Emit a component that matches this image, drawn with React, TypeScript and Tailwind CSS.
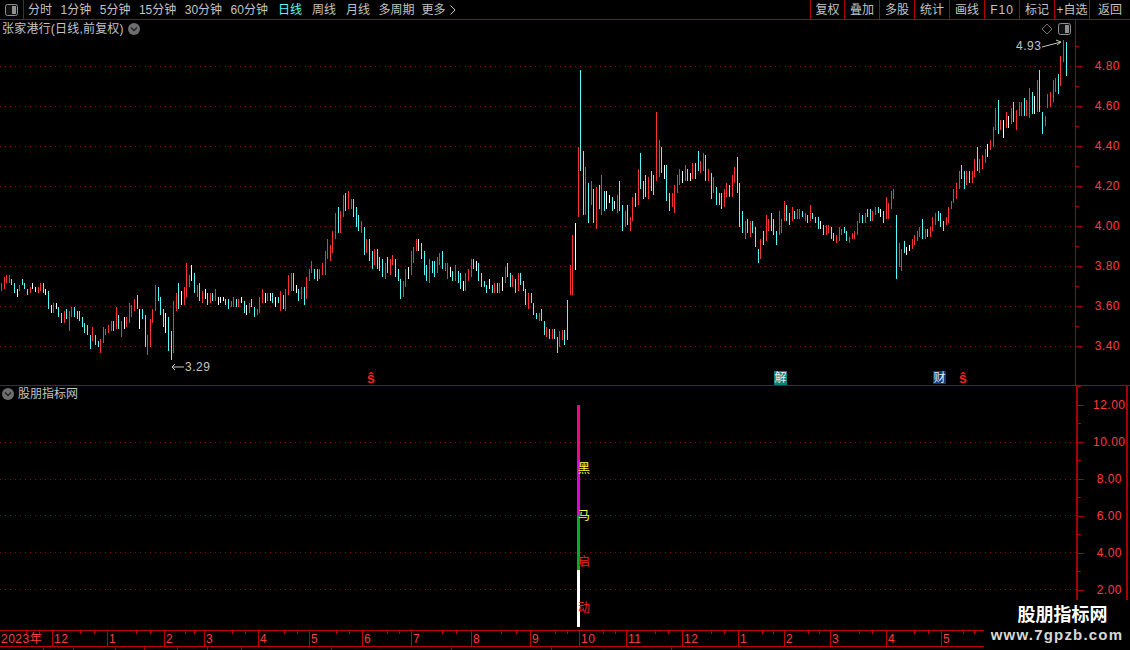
import React from "react";

type G = { ox: number; oy: number; s: string };
const groups: G[] = [
  { ox: 0, oy: 260, s: "4 69 93 r,13 51 87 r,19 45 69 r,28 45 69 r,34 57 75 c,43 69 99 c,52 87 111 w,58 75 93 r,67 57 75 c,73 69 87 c,82 87 105 c,91 81 99 r,97 69 87 w,106 81 96 w,115 81 99 r,121 69 93 r,130 69 99 c,136 87 105 w,145 93 147 c,154 135 159 w,160 129 159 r,169 129 147 w,175 141 171 c,184 159 189 c,193 153 189 r,199 147 177 c,208 153 213 r,214 141 171 r,223 141 171 c,232 153 177 c,238 153 183 c,247 171 201 c,253 189 219 c,262 195 225 c,271 225 267 c,277 201 243 r,286 225 255 c,295 243 261 c,301 237 279 r,310 201 249 r,316 207 225 r,325 195 219 r,334 183 213 r,340 183 213 c,349 141 207 r,355 165 207 c,364 183 231 r,373 171 207 w,379 171 201 r,388 129 189 r,394 135 171 r,403 117 153 r,412 105 147 c,418 147 207 w" },
  { ox: 140, oy: 180, s: "6 387 417 c,15 405 501 c,21 465 525 r,30 417 501 r,36 387 429 r,45 315 393 r,54 321 363 c,60 351 405 c,69 387 441 c,75 399 459 w,84 411 513 c,93 453 540 c,99 363 519 r,108 339 393 r,114 309 387 c,123 333 375 w,132 321 375 r,138 249 351 r,147 285 321 r,153 255 303 w,162 279 339 c,171 315 351 r,177 309 363 c,186 333 369 r,195 327 357 w,201 339 375 c,210 339 369 r,216 339 363 c,225 327 363 r,234 351 375 w,240 351 369 w,249 351 363 w,255 357 375 c,264 357 387 c,273 363 381 r,279 351 381 r,288 357 381 c,294 357 381 r,303 351 369 w,312 363 399 c,318 375 405 w,327 369 399 r,333 357 381 c,342 381 411 c,351 387 405 r,357 351 399 r,366 327 369 r,375 339 369 w,381 339 363 r,390 339 363 w,396 339 369 c,405 351 381 w,414 351 369 c,420 333 393 r,429 345 387 c,435 327 393 r,444 285 345 r,453 279 333 r,459 279 333 c,468 315 339 w,474 327 363 c,483 321 357 r,492 321 375 c,498 291 357 r,507 267 303 r,513 243 279 r,522 267 297 c,531 267 303 c,537 267 297 r,546 249 285 r,555 213 285 r,561 177 237 r,570 195 243 r,576 153 219 r,585 99 177 r,594 81 159 c,600 93 159 r,609 45 111 r,615 39 93 c,624 33 87 r,633 57 87 r,639 57 111 c,648 81 141 c,654 105 153 c,663 123 159 r,672 141 225 c,678 177 219 r,687 177 243 c,696 213 267 c,702 207 255 r,711 207 267 c,717 231 273 c,726 237 291 c,735 249 297 r,741 231 279 c,750 237 285 r,756 225 255 r,765 237 291 c,774 267 303 c,780 297 357 c,789 303 351 r,795 267 321 r,804 261 297 w,813 213 285 r,819 201 249 r,828 177 213 r,834 177 213 w,843 189 237 c,852 213 285 c,858 255 303 c,867 237 309 r,876 243 279 c,882 243 291 c,891 231 279 r,897 219 255 r,906 213 267 c,915 249 273 r,921 249 297 r,930 261 291 w,936 273 303 c,945 255 303 r,954 273 309 c,960 279 327 c,969 303 333 w,975 279 333 r,984 267 303 r,993 237 291 r,999 237 267 c,1008 243 273 w,1014 249 303 c,1023 279 321 c,1032 303 321 c,1038 315 339 c,1047 297 327 w,1056 315 339 c,1062 309 339 r,1071 309 339 c,1077 309 339 r,1086 291 333 w,1095 261 309 r,1101 249 291 c,1110 279 321 c,1116 285 321 r,1125 297 339 c,1134 279 333 r,1140 279 315 c,1149 303 333 c,1155 327 375 c,1164 339 387 r,1173 339 369 c,1179 369 405 c,1188 399 417 c,1197 399 423 r,1203 387 423 c,1212 423 465 c,1218 441 471 r,1227 447 477 c,1236 447 477 r,1242 447 477 c,1251 471 519 c,1257 453 501 r" },
  { ox: 560, oy: 0, s: "6 990 1020 r,12 990 1035 c,21 900 1020 c,30 795 885 r,36 705 885 r,45 669 810 w" },
  { ox: 500, oy: 60, s: "235 261 471 r,241 30 333 c,250 273 465 c,256 321 465 r,265 369 489 c,274 363 435 r,280 387 489 c,289 381 507 r,298 375 447 c,304 345 465 r,313 393 453 c,319 393 447 w,328 405 429 w,337 411 453 c,343 423 447 w,352 405 459 r,358 363 453 c,367 435 513 c,376 453 501 r,382 435 495 c,391 471 513 r,397 411 483 r,406 399 441 c,415 327 435 r,421 279 387 c,430 363 417 c,436 345 411 c,445 351 417 r,454 333 393 c,460 345 405 c,469 155 363 r,478 240 351 r,484 261 339 c,493 315 357 w,499 315 423 c,508 399 453 c,517 399 441 r,523 375 459 r,532 345 399 r,538 327 375 r,547 333 369 w,556 315 363 r,562 327 363 c,571 339 363 w,577 309 357 r,586 309 357 c,595 273 333 c,601 303 339 r,610 279 333 r,616 285 363 c,625 327 363 r,634 339 417 c,640 351 399 r,649 381 435 c,658 399 435 c,664 399 447 c,673 387 441 r,679 369 411 r,688 375 411 c,697 345 411 r,703 321 369 r,712 291 399 c,718 369 501 c,727 453 519 c,736 483 537 r,742 477 519 c,751 483 531 r,757 483 519 c" },
  { ox: 730, oy: 150, s: "76 231 291 c,85 297 339 c,91 267 327 r,100 243 285 c,109 195 273 r,115 207 243 r,124 189 243 c,130 207 255 c,139 243 285 c,148 183 255 r,154 207 249 r,163 153 213 r,169 165 213 c,178 189 225 c,187 171 213 r,193 183 207 c,202 177 207 r,208 177 207 r,217 183 201 c,226 189 213 r,232 195 219 c,241 165 213 r,247 189 207 c,256 201 219 c,265 201 237 c,271 213 237 w,280 225 255 c,289 225 255 r,295 225 249 r,304 231 267 c,310 249 273 c,319 255 279 r,328 231 273 r,334 237 255 r,343 231 249 c,349 243 273 c,358 261 279 r,367 249 267 r,373 243 267 r,382 213 255 r,388 189 219 r,397 195 219 c,406 189 219 r,412 177 201 c,421 177 213 c,427 183 213 r,436 171 195 r,445 171 189 c,451 177 201 w,460 183 219 c,469 141 207 r,475 159 207 r,484 123 177 r,490 117 147 r,499 195 387 c,508 279 351 r,514 297 363 r,523 273 309 c,529 291 315 w,538 285 303 w,547 267 297 r,553 255 285 r,562 243 273 r,568 231 261 r,577 207 267 c,586 237 267 r,592 237 261 c" },
  { ox: 880, oy: 30, s: "151 591 621 r,157 561 603 r,166 549 585 r,175 543 573 c,181 549 591 c,190 573 603 c,199 561 585 r,205 531 579 r,214 513 537 r,220 477 519 r,229 459 507 r,238 423 477 r,244 405 447 c,253 423 477 c,259 423 465 r,268 423 459 c,277 423 459 r,283 387 441 r,292 351 423 c,298 387 429 r,307 375 417 r,316 357 399 r,322 342 381 w,331 330 360 r,340 291 351 r,346 234 300 r,355 210 312 c,361 270 300 r,370 270 324 w,379 246 294 r,385 258 294 w,394 234 282 r,400 216 276 c,409 240 300 r,418 216 258 r,424 216 258 r,433 204 258 c,439 210 258 r,448 174 264 r,457 186 252 c,463 198 252 w,472 150 246 r,478 120 246 c,487 246 312 c,496 258 288 r,502 192 234 r,511 186 231 r,520 150 216 r,526 144 186 r,535 132 192 c,541 78 168 r,550 30 96 r,559 36 138 c" },
];
const colors: Record<string, string> = { r: "#ff3232", c: "#54fcfc", w: "#ffffff" };
const bars = groups.flatMap((g) =>
  g.s.split(",").map((t) => {
    const [x, a, b, c] = t.split(" ");
    const y0 = g.oy + Math.round(+a / 3);
    const y1 = g.oy + Math.round(+b / 3);
    return { x: g.ox + Math.floor(+x / 3), y: y0, h: y1 - y0, c: colors[c] };
  })
);

const periods: [string, string][] = [
  ["分时", ""], ["1分钟", ""], ["5分钟", ""], ["15分钟", ""], ["30分钟", ""], ["60分钟", ""],
  ["日线", "ml-[1.5px] text-[#54fcfc]"], ["周线", "ml-[1.5px]"], ["月线", "ml-[1.5px]"], ["多周期", ""],
];
const tools = [
  ["复权", "w-[34px]"], ["叠加", "w-[35px]"], ["多股", "w-[35px]"], ["统计", "w-[35px]"], ["画线", "w-[35px]"],
  ["F10", "w-[35px]"], ["标记", "w-[35px]"], ["+自选", "w-[35px]"], ["返回", "w-[41px]"],
];
const months: [string, number][] = [
  ["2023年", 52], ["12", 55], ["1", 57], ["2", 40], ["3", 54], ["4", 51], ["5", 53], ["6", 49], ["7", 60],
  ["8", 59], ["9", 49], ["10", 47], ["11", 56], ["12", 56], ["1", 46], ["2", 46], ["3", 56], ["4", 55], ["5", 43],
];
const bottomCells = [44, 30, 42, 29, 33, 30, 34, 90, 120, 100, 120, 313];

function PanelIcon() {
  return (
    <svg width="13" height="12" viewBox="0 0 13 12">
      <rect x="0.5" y="0.5" width="12" height="11" rx="2" fill="#111" stroke="#909090" />
      <rect x="7" y="2" width="4" height="8" fill="#909090" />
    </svg>
  );
}
function Chevron() {
  return (
    <svg width="12" height="12" viewBox="0 0 12 12">
      <circle cx="6" cy="6" r="6" fill="#6e6e6e" />
      <path d="M3 4.5 L6 7.5 L9 4.5" fill="none" stroke="#222" strokeWidth="1.4" />
    </svg>
  );
}
function GridH({ ys, x2 }: { ys: number[]; x2: number }) {
  return (
    <>
      {ys.map((y) => (
        <line key={y} x1="0" x2={x2} y1={y + 0.5} y2={y + 0.5} stroke="#861010" strokeDasharray="1 4" />
      ))}
    </>
  );
}
function Axis({ labels, step, pad }: { labels: string[]; step: string; pad: string }) {
  return (
    <div className={`flex flex-col ${pad}`}>
      {labels.map((l) => (
        <div key={l} className={`relative flex items-center ${step} pl-[15px] justify-start`}>
          <div className="absolute left-0 top-0 h-px w-[3px] bg-[#a80000]" />
          <div className="absolute left-0 top-1/2 h-px w-[6px] bg-[#a80000]" />
          <span className="w-[29px] text-right text-[12px] tracking-[0.5px] text-[#ff3c3c]">{l}</span>
        </div>
      ))}
    </div>
  );
}

export default function App() {
  return (
    <div className="relative h-[650px] w-[1130px] overflow-hidden bg-black text-[12px] leading-none text-[#c4c4c4] font-['Liberation_Sans','Noto_Sans_CJK_SC',sans-serif]">
      {/* toolbar */}
      <div className="flex h-[20px] items-stretch border-b border-[#b00000]">
        <div className="flex w-[24px] items-center justify-center border-r border-[#b00000]">
          <PanelIcon />
        </div>
        <div className="flex items-center gap-[8.5px] pl-[4px]">
          {periods.map(([p, c]) => (
            <span key={p} className={c}>{p}</span>
          ))}
          <span className="flex items-center gap-[4px] -ml-[1.5px]">
            更多
            <svg width="6" height="10" viewBox="0 0 6 10"><path d="M0.5 0.5 L5 5 L0.5 9.5" fill="none" stroke="#c4c4c4" /></svg>
          </span>
        </div>
        <div className="ml-auto flex">
          {tools.map(([t, w]) => (
            <div key={t} className={`flex items-center justify-center whitespace-nowrap border-l border-[#b00000] ${w} ${t === "F10" ? "tracking-[1px]" : ""}`}>{t}</div>
          ))}
        </div>
      </div>

      {/* main panel */}
      <div className="flex h-[366px] border-b border-[#a80000]">
        <div className="relative w-[1075px]">
          <svg className="absolute inset-0" width="1075" height="365" viewBox="0 20 1075 365" shapeRendering="crispEdges">
            <GridH ys={[66, 106, 146, 186, 226, 266, 306, 346]} x2={1075} />
            {bars.map((b, i) => (
              <rect key={i} x={b.x} y={b.y} width="1" height={b.h} fill={b.c} />
            ))}
          </svg>
          <div className="absolute left-[2px] top-[3px] flex items-center gap-[4px]">
            <span className="tracking-[0.2px]">张家港行(日线,前复权)</span>
            <Chevron />
          </div>
          <div className="absolute left-[1041px] top-[3px] flex items-center gap-[5px]">
            <svg width="12" height="12" viewBox="0 0 12 12"><path d="M6 1 L11 6 L6 11 L1 6 Z" fill="none" stroke="#707070" /></svg>
            <PanelIcon />
          </div>
          <div className="absolute left-[1016px] top-[20px] flex items-center tracking-[0.5px]">
            <span>4.93</span>
            <svg width="22" height="10" viewBox="0 0 22 10" className="-mt-[4px]">
              <path d="M1 8 L20 3 M15 1 L20 3 L16 6" fill="none" stroke="#c4c4c4" />
            </svg>
          </div>
          <div className="absolute left-[171px] top-[341px] flex items-center tracking-[0.5px]">
            <svg width="13" height="8" viewBox="0 0 13 8">
              <path d="M1 4 L13 4 M4 1 L1 4 L4 7" fill="none" stroke="#c4c4c4" />
            </svg>
            <span className="ml-[1px]">3.29</span>
          </div>
          <span className="absolute left-[367px] top-[351px] font-bold text-[14px] text-[#ff2020]">ŝ</span>
          <span className="absolute left-[774px] top-[351px] flex h-[14px] w-[13px] items-center justify-center bg-[#0a8080] text-[#e8e8e8]">解</span>
          <span className="absolute left-[933px] top-[351px] flex h-[13px] w-[13px] items-center justify-center bg-[#103c70] text-[#e8e8e8]">财</span>
          <span className="absolute left-[959px] top-[351px] font-bold text-[14px] text-[#ff2020]">ŝ</span>
        </div>
        <div className="flex-1 border-l border-[#a80000]">
          <Axis labels={["4.80", "4.60", "4.40", "4.20", "4.00", "3.80", "3.60", "3.40"]} step="h-[40px]" pad="pt-[26px]" />
        </div>
      </div>

      {/* indicator panel */}
      <div className="flex h-[244px]">
        <div className="relative w-[1076px]">
          <svg className="absolute inset-0" width="1076" height="244" viewBox="0 386 1076 244" shapeRendering="crispEdges">
            <GridH ys={[442, 479, 515, 552, 589]} x2={1076} />
          </svg>
          <div className="absolute left-[2px] top-[2px] flex items-center gap-[4px]">
            <Chevron />
            <span>股朋指标网</span>
          </div>
          <div className="absolute left-[577px] top-[19px] flex w-[3px] flex-col">
            <div className="h-[55px] bg-[#ff0080]" />
            <div className="h-[56px] bg-[#e000e0]" />
            <div className="h-[54px] bg-[#00b020]" />
            <div className="h-[57px] bg-white" />
          </div>
          <span className="absolute left-[578px] top-[77px] text-[#ffff50]">黑</span>
          <span className="absolute left-[578px] top-[124px] text-[#ffff50]">马</span>
          <span className="absolute left-[578px] top-[170px] text-[#ff2020]">启</span>
          <span className="absolute left-[578px] top-[216px] text-[#ff2020]">动</span>
        </div>
        <div className="flex flex-1 border-l-2 border-[#a80000]">
          <div className="w-[48px]">
            <Axis labels={["12.00", "10.00", "8.00", "6.00", "4.00", "2.00"]} step="h-[37px]" pad="pt-0" />
          </div>
          <div className="w-[2px] bg-[#a80000]" />
        </div>
      </div>

      {/* time axis */}
      <div className="flex h-[17px] w-[1130px] border-y border-[#c00000]">
        {months.map(([m, w], i) => (
          <div
            key={i}
            className={`relative flex items-center pl-[1px] text-[12px] tracking-[0.5px] text-[#ff3c3c] ${i ? "border-l border-[#c00000]" : ""}`}
            style={{ width: w }}
          >
            {m}
            <span className="absolute left-1/2 top-0 h-[3px] w-px bg-[#c00000]" />
            <span className="absolute left-3/4 top-0 h-[3px] w-px bg-[#c00000]" />
          </div>
        ))}
      </div>
      <div className="flex h-[3px] overflow-hidden">
        {bottomCells.map((w, i) => (
          <div key={i} className="border-r border-[#a80000]" style={{ width: w }} />
        ))}
      </div>

      {/* watermark */}
      <div className="absolute bottom-0 right-0 flex h-[50px] w-[146px] flex-col items-center bg-black pt-[4px]">
        <span className="text-[18px] font-bold text-white leading-[22px] pl-[11px]">股朋指标网</span>
        <span className="text-[15px] font-bold tracking-[1.2px] text-[#d8d8d8] leading-[17px] font-['Liberation_Sans',sans-serif]">www.7gpzb.com</span>
      </div>
    </div>
  );
}
